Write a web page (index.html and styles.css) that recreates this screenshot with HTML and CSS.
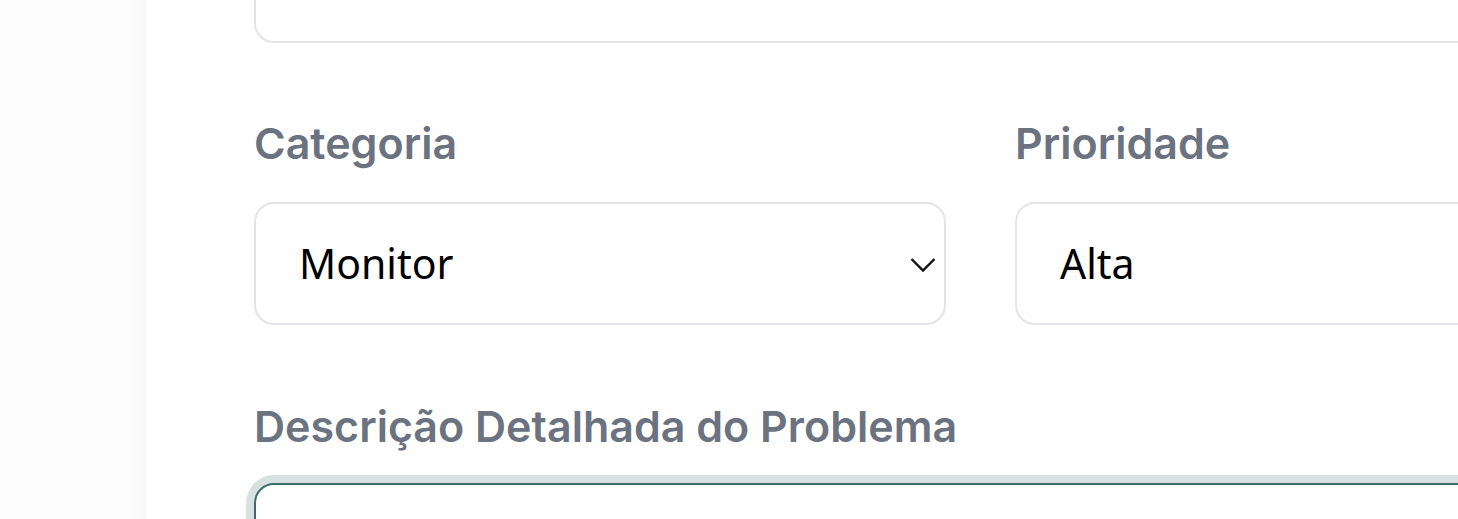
FILE: index.html
```html
<!DOCTYPE html>
<html lang="pt">
<head>
<meta charset="utf-8">
<title>Formulário</title>
<link rel="stylesheet" href="styles.css">
</head>
<body>
<div class="page">
  <main class="card">
    <div class="field field-top">
      <div class="box"></div>
    </div>
    <div class="row">
      <div class="field">
        <label class="label">Categoria</label>
        <div class="box select">
          <span class="value">Monitor</span>
          <svg class="chev" width="26" height="16" viewBox="0 0 26 16"><polyline points="1.5,2 13,13.5 24.5,2" fill="none" stroke="#111" stroke-width="2.4"/></svg>
        </div>
      </div>
      <div class="field">
        <label class="label">Prioridade</label>
        <div class="box select">
          <span class="value">Alta</span>
        </div>
      </div>
    </div>
    <div class="field field-desc">
      <label class="label">Descrição Detalhada do Problema</label>
      <div class="box textarea"></div>
    </div>
  </main>
</div>
</body>
</html>
```
FILE: styles.css
```css
* { box-sizing: border-box; }
html, body { margin: 0; padding: 0; }
body {
  background: #fdfdfd;
  overflow: hidden;
  width: 1458px;
  height: 519px;
}
.page {
  padding-left: 146px;
}
.card {
  width: 1700px;
  height: 700px;
  background: #ffffff;
  box-shadow: 0 0 16px rgba(0, 0, 0, 0.05);
  padding: 0 0 0 108px;
}
.field-top {
  margin-top: -80px;
}
.field-top .box {
  height: 123px;
  width: 1500px;
}
.row {
  display: grid;
  grid-template-columns: 692px 692px;
  column-gap: 69px;
  margin-top: 74px;
}
.label {
  display: block;
  font-family: "Inter", "Liberation Sans", sans-serif;
  font-weight: 600;
  font-size: 43px;
  line-height: 52px;
  color: #6b7280;
  margin-bottom: 33px;
}
.box {
  border: 2.5px solid #e2e4e8;
  border-radius: 20px;
  background: #fff;
}
.select {
  height: 123px;
  display: flex;
  align-items: center;
  padding: 0 10px 0 43px;
  position: relative;
}
.value {
  font-family: "Noto Sans", "Open Sans", sans-serif;
  font-size: 41px;
  color: #000;
  line-height: 1;
  padding-top: 0;
}
.chev {
  position: absolute;
  left: 654px;
  top: 53px;
}
.field-desc {
  margin-top: 75px;
}
.field-desc .label {
  margin-bottom: 31px;
}
.textarea {
  height: 200px;
  width: 1500px;
  border-color: #3e6b6c;
  box-shadow: 0 0 0 8px #d8e1e1;
}
```
